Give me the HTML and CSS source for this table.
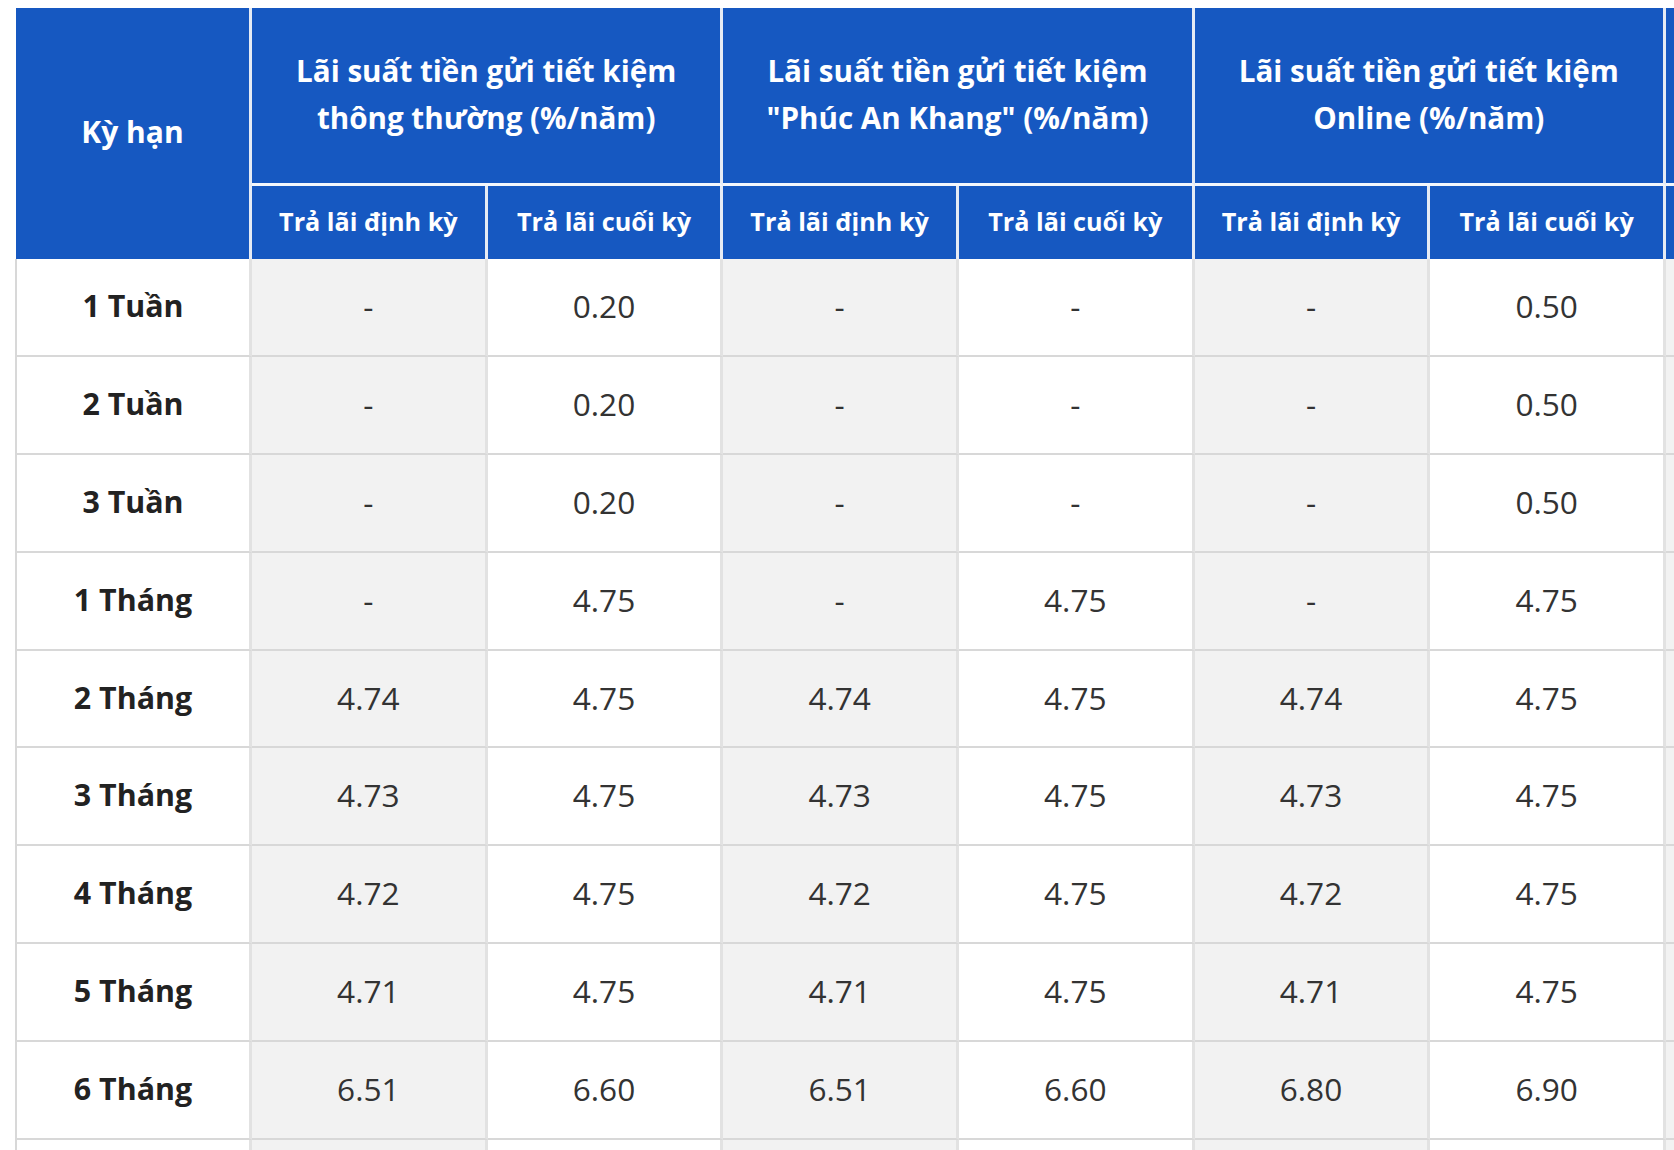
FILE: index.html
```html
<!DOCTYPE html>
<html lang="vi">
<head>
<meta charset="utf-8">
<title>Lãi suất tiền gửi tiết kiệm</title>
<link rel="stylesheet" href="styles.css">
</head>
<body>
<div class="wrap">
<table class="rates">
  <colgroup>
    <col class="c-term">
    <col class="c-data"><col class="c-data">
    <col class="c-data"><col class="c-data">
    <col class="c-data"><col class="c-data">
    <col class="c-more">
  </colgroup>
  <thead>
    <tr class="h1">
      <th class="term-h" rowspan="2">Kỳ hạn</th>
      <th class="grp" colspan="2">Lãi suất tiền gửi tiết kiệm<br>thông thường (%/năm)</th>
      <th class="grp" colspan="2">Lãi suất tiền gửi tiết kiệm<br>"Phúc An Khang" (%/năm)</th>
      <th class="grp" colspan="2">Lãi suất tiền gửi tiết kiệm<br>Online (%/năm)</th>
      <th class="grp more"></th>
    </tr>
    <tr class="h2">
      <th class="sub">Trả lãi định kỳ</th>
      <th class="sub">Trả lãi cuối kỳ</th>
      <th class="sub">Trả lãi định kỳ</th>
      <th class="sub">Trả lãi cuối kỳ</th>
      <th class="sub">Trả lãi định kỳ</th>
      <th class="sub">Trả lãi cuối kỳ</th>
      <th class="sub more"></th>
    </tr>
  </thead>
  <tbody>
    <tr><td class="term">1 Tuần</td><td class="p">-</td><td class="e">0.20</td><td class="p">-</td><td class="e">-</td><td class="p">-</td><td class="e">0.50</td><td class="p more"></td></tr>
    <tr><td class="term">2 Tuần</td><td class="p">-</td><td class="e">0.20</td><td class="p">-</td><td class="e">-</td><td class="p">-</td><td class="e">0.50</td><td class="p more"></td></tr>
    <tr><td class="term">3 Tuần</td><td class="p">-</td><td class="e">0.20</td><td class="p">-</td><td class="e">-</td><td class="p">-</td><td class="e">0.50</td><td class="p more"></td></tr>
    <tr><td class="term">1 Tháng</td><td class="p">-</td><td class="e">4.75</td><td class="p">-</td><td class="e">4.75</td><td class="p">-</td><td class="e">4.75</td><td class="p more"></td></tr>
    <tr><td class="term">2 Tháng</td><td class="p">4.74</td><td class="e">4.75</td><td class="p">4.74</td><td class="e">4.75</td><td class="p">4.74</td><td class="e">4.75</td><td class="p more"></td></tr>
    <tr><td class="term">3 Tháng</td><td class="p">4.73</td><td class="e">4.75</td><td class="p">4.73</td><td class="e">4.75</td><td class="p">4.73</td><td class="e">4.75</td><td class="p more"></td></tr>
    <tr><td class="term">4 Tháng</td><td class="p">4.72</td><td class="e">4.75</td><td class="p">4.72</td><td class="e">4.75</td><td class="p">4.72</td><td class="e">4.75</td><td class="p more"></td></tr>
    <tr><td class="term">5 Tháng</td><td class="p">4.71</td><td class="e">4.75</td><td class="p">4.71</td><td class="e">4.75</td><td class="p">4.71</td><td class="e">4.75</td><td class="p more"></td></tr>
    <tr><td class="term">6 Tháng</td><td class="p">6.51</td><td class="e">6.60</td><td class="p">6.51</td><td class="e">6.60</td><td class="p">6.80</td><td class="e">6.90</td><td class="p more"></td></tr>
    <tr><td class="term"></td><td class="p"></td><td class="e"></td><td class="p"></td><td class="e"></td><td class="p"></td><td class="e"></td><td class="p more"></td></tr>
  </tbody>
</table>
</div>
</body>
</html>
```

FILE: styles.css
```css
html, body {
  margin: 0;
  padding: 0;
  background: #ffffff;
  overflow: hidden;
}

.wrap {
  width: 1674px;
  height: 1150px;
  overflow: hidden;
  padding: 8px 0 0 15px;
  box-sizing: border-box;
}

.rates {
  border-collapse: separate;
  border-spacing: 0;
  table-layout: fixed;
  width: 1711px;
  font-family: "Open Sans", "Noto Sans", sans-serif;
}

.c-term { width: 237px; }
.c-data { width: 235.67px; }
.c-more { width: 60px; }

.rates th,
.rates td {
  box-sizing: border-box;
  padding: 0;
  text-align: center;
  vertical-align: middle;
}

/* header */
.rates th {
  background: #1658c1;
  color: #ffffff;
  font-weight: 700;
  border-right: 3px solid #e6ebf4;
}

.h1 th {
  height: 178px;
  border-bottom: 3px solid #f4f7fc;
}

.term-h {
  font-size: 30px;
  line-height: 46px;
  padding-bottom: 4px !important;
  border-left: 1px solid #ffffff;
}

.h1 .term-h {
  border-bottom: 0;
}

.grp {
  font-size: 29.6px;
  line-height: 46.7px;
  padding-bottom: 1px !important;
}

.h2 th {
  height: 73px;
  font-size: 25.2px;
  line-height: 36px;
  padding-bottom: 4px !important;
}

/* body */
.rates td {
  height: 97.9px;
  border-right: 3px solid #e2e2e2;
  border-bottom: 2px solid #d8d8d8;
  font-size: 31.6px;
  line-height: 42px;
  padding-bottom: 2px;
  color: #333333;
  font-weight: 400;
}

.rates td.term {
  border-left: 2px solid #d8d8d8;
  font-size: 30.4px;
  font-weight: 700;
  color: #222222;
  background: #ffffff;
}

.rates td.p {
  background: #f2f2f2;
}

.rates td.e {
  background: #ffffff;
}
```
